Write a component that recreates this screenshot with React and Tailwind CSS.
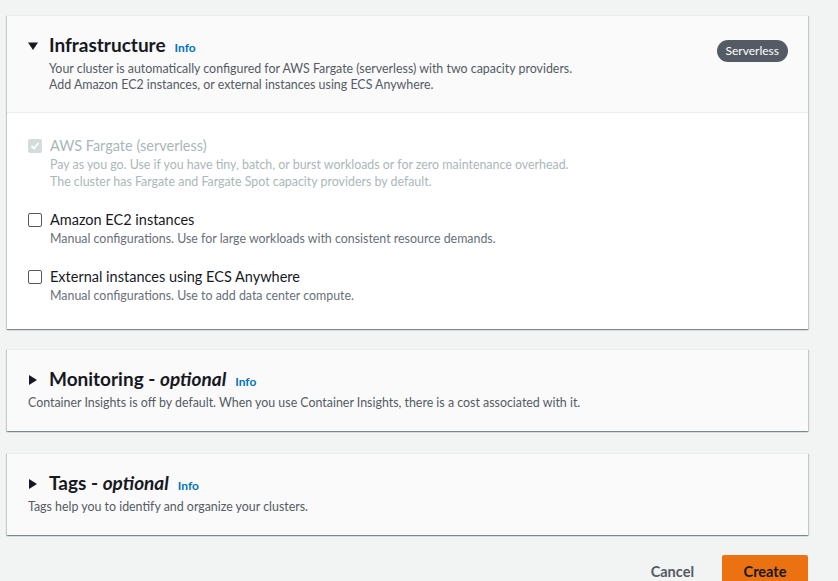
import React from "react";

const Caret = ({ open }) => (
  <svg width="10" height="10" viewBox="0 0 10 10" className="shrink-0 self-center">
    {open ? <path d="M0 1.5 L10 1.5 L5 9 Z" fill="#16191f" /> : <path d="M1 0 L9 5 L1 10 Z" fill="#16191f" />}
  </svg>
);

const Check = ({ checked, disabled }) => (
  <span
    className={
      "mt-[2px] flex h-[14px] w-[14px] shrink-0 items-center justify-center rounded-[2px] border " +
      (disabled ? "border-[#d5dbdb] bg-[#d5dbdb]" : "border-[#545b64] bg-white")
    }
  >
    {checked && (
      <svg width="10" height="10" viewBox="0 0 10 10">
        <path d="M1.5 5 L4 7.5 L8.5 2" fill="none" stroke="white" strokeWidth="1.8" />
      </svg>
    )}
  </span>
);

const Option = ({ title, lines, disabled, checked }) => (
  <div className="flex gap-[8px]">
    <Check checked={checked} disabled={disabled} />
    <div>
      <div className={"text-[14.5px] leading-[18px] " + (disabled ? "text-[#aab7b8]" : "text-[#16191f]")}>{title}</div>
      <div className={"mt-[1px] text-[12.4px] leading-[17px] " + (disabled ? "text-[#aab7b8]" : "text-[#687078]")}>
        {lines.map((l) => (
          <div key={l}>{l}</div>
        ))}
      </div>
    </div>
  </div>
);

const Info = () => <span className="ml-[9px] text-[12px] font-bold text-[#0073bb]">Info</span>;

const shadow =
  "shadow-[0_1px_1px_0_rgba(0,28,36,0.3),1px_1px_1px_0_rgba(0,28,36,0.15),-1px_1px_1px_0_rgba(0,28,36,0.15)] border-t border-[#eaeded]";

const Collapsed = ({ title, desc }) => (
  <div className={"bg-[#fafafa] px-[21px] pt-[18px] pb-[20px] " + shadow}>
    <div className="flex items-baseline">
      <Caret />
      <h2 className="ml-[11px] text-[19px] font-bold leading-[22px] text-[#16191f]">
        {title} - <i>optional</i>
      </h2>
      <Info />
    </div>
    <p className="mt-[4px] text-[12.4px] leading-[16px] text-[#545b64]">{desc}</p>
  </div>
);

export default function App() {
  return (
    <div className="min-h-[581px] bg-[#f2f3f3] pt-[15px] pl-[7px] pr-[30px]" style={{ fontFamily: "Lato, 'Noto Sans', sans-serif" }}>
      <div className="w-[801px]">
        <div className={"bg-white " + shadow}>
          <div className="flex items-start justify-between border-b border-[#eaeded] bg-[#fafafa] px-[21px] pt-[18px] pb-[19px]">
            <div>
              <div className="flex items-baseline">
                <Caret open />
                <h2 className="ml-[11px] text-[19px] font-bold leading-[22px] text-[#16191f]">Infrastructure</h2>
                <Info />
              </div>
              <p className="mt-[4px] pl-[21px] text-[12.4px] leading-[16px] text-[#545b64]">
                Your cluster is automatically configured for AWS Fargate (serverless) with two capacity providers.
                <br />
                Add Amazon EC2 instances, or external instances using ECS Anywhere.
              </p>
            </div>
            <span className="mt-[6px] mr-[-1px] rounded-full bg-[#545b64] px-[9px] py-[3px] text-[12px] leading-[16px] text-white">
              Serverless
            </span>
          </div>
          <div className="flex flex-col gap-[21px] px-[21px] pt-[24px] pb-[25px]">
            <Option
              checked
              disabled
              title="AWS Fargate (serverless)"
              lines={[
                "Pay as you go. Use if you have tiny, batch, or burst workloads or for zero maintenance overhead.",
                "The cluster has Fargate and Fargate Spot capacity providers by default.",
              ]}
            />
            <Option title="Amazon EC2 instances" lines={["Manual configurations. Use for large workloads with consistent resource demands."]} />
            <Option title="External instances using ECS Anywhere" lines={["Manual configurations. Use to add data center compute."]} />
          </div>
        </div>

        <div className="mt-[20px]">
          <Collapsed
            title="Monitoring"
            desc="Container Insights is off by default. When you use Container Insights, there is a cost associated with it."
          />
        </div>
        <div className="mt-[22px]">
          <Collapsed title="Tags" desc="Tags help you to identify and organize your clusters." />
        </div>

        <div className="mt-[20px] flex items-center justify-end gap-[8px]">
          <button className="px-[20px] py-[6px] text-[14.5px] font-bold text-[#545b64]">Cancel</button>
          <button className="w-[86px] rounded-[2px] bg-[#ec7211] py-[6px] text-[14.5px] font-bold text-[#16191f]">Create</button>
        </div>
      </div>
    </div>
  );
}
